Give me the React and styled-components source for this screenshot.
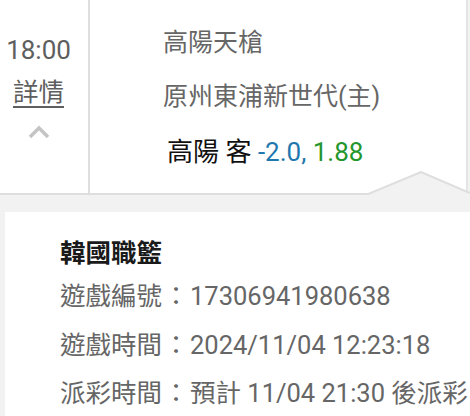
import React from "react";
import styled, { createGlobalStyle } from "styled-components";

const GlobalStyle = createGlobalStyle`
  body {
    margin: 0;
    background: #f2f2f2;
    font-family: Roboto, "Noto Sans CJK TC", sans-serif;
  }
`;

const Page = styled.div`
  width: 470px;
  height: 416px;
  overflow: hidden;
  background: #f2f2f2;
`;

const MatchRow = styled.div`
  position: relative;
  display: flex;
  width: 468px;
  height: 193px;
  background: #fff;
  border-bottom: 2px solid #dedede;
`;

const TimeCol = styled.div`
  width: 77px;
  padding: 31px 11px 0 0;
  display: flex;
  flex-direction: column;
  align-items: center;
  border-right: 2px solid #dedede;
`;

const Time = styled.div`
  font-size: 26px;
  line-height: 38px;
  color: #5e5e5e;
`;

const DetailLink = styled.a`
  margin-top: 4px;
  font-size: 25.5px;
  line-height: 38px;
  color: #5e5e5e;
  text-decoration: underline;
  text-underline-offset: 5px;
  text-decoration-thickness: 2px;
`;

const Chevron = styled.svg`
  margin-top: 14px;
  width: 22px;
  height: 14px;
`;

const TeamsCol = styled.div`
  flex: 1;
  padding: 16px 0 0 73px;
  border-right: 2px solid #e4e4e4;
`;

const Team = styled.div`
  font-size: 25px;
  line-height: 54px;
  color: #666;
`;

const Bet = styled.div`
  margin-left: 4px;
  font-size: 26px;
  line-height: 56px;
  color: #111;
`;

const Odd = styled.span`
  color: ${({ $tone }) => ($tone === "blue" ? "#1f78ad" : "#23962c")};
`;

// the arrow pointing up at the expanded row
const Notch = styled.svg`
  position: absolute;
  right: -2px;
  bottom: -2px;
  width: 102px;
  height: 24px;
`;

const Lower = styled.div`
  padding: 17px 0 0 5px;
`;

const Card = styled.div`
  background: #fff;
  height: 220px;
  padding: 23px 0 0 55px;
`;

const League = styled.div`
  font-size: 25.5px;
  font-weight: 700;
  line-height: 36px;
  color: #1a1a1a;
`;

const Info = styled.div`
  font-size: 25.5px;
  line-height: 46.5px;
  color: #666;
  white-space: nowrap;
`;

const Colon = styled.span`
  display: inline-block;
  width: 28px;
  text-align: center;
  font-family: "Noto Sans CJK TC", sans-serif;
`;

const infoRows = [
  ["遊戲編號", "17306941980638"],
  ["遊戲時間", "2024/11/04 12:23:18"],
  ["派彩時間", "預計 11/04 21:30 後派彩"],
];

export default function App() {
  return (
    <Page lang="zh-Hant-TW">
      <GlobalStyle />
      <MatchRow>
        <TimeCol>
          <Time>18:00</Time>
          <DetailLink>詳情</DetailLink>
          <Chevron viewBox="0 0 22 14">
            <path d="M2 12 L11 3 L20 12" fill="none" stroke="#c4c4c4" strokeWidth="3.5" />
          </Chevron>
        </TimeCol>
        <TeamsCol>
          <Team>高陽天槍</Team>
          <Team>原州東浦新世代(主)</Team>
          <Bet>
            高陽 客 <Odd $tone="blue">-2.0,</Odd> <Odd $tone="green">1.88</Odd>
          </Bet>
        </TeamsCol>
        <Notch viewBox="0 0 102 24">
          <polygon points="0,24 53,1 102,23 102,24" fill="#f2f2f2" />
          <polyline points="0,23 53,1 102,22" fill="none" stroke="#dedede" strokeWidth="2" />
        </Notch>
      </MatchRow>
      <Lower>
        <Card>
          <League>韓國職籃</League>
          {infoRows.map(([label, value]) => (
            <Info key={label}>
              {label}
              <Colon>：</Colon>
              {value}
            </Info>
          ))}
        </Card>
      </Lower>
    </Page>
  );
}
